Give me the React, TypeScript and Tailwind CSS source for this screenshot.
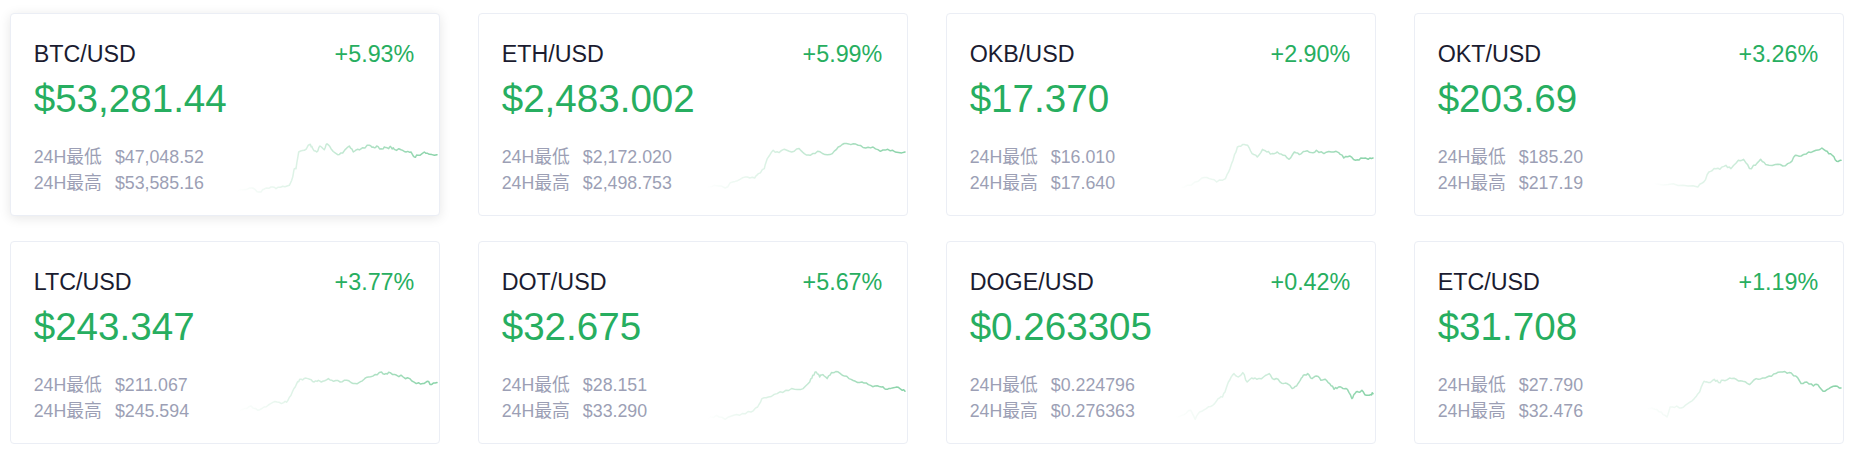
type Pt = [number, number];

interface Ticker {
  pair: string;
  change: string;
  price: string;
  low: string;
  high: string;
  line: Pt[];
}

const tickers: Ticker[] = [
  {
    pair: "BTC/USD",
    change: "+5.93%",
    price: "$53,281.44",
    low: "$47,048.52",
    high: "$53,585.16",
    line: [
      [0, 48.3], [6.7, 46.7], [16.7, 45], [23.3, 49], [28.3, 46], [35, 44], [40, 45.7], [46.7, 43.3],
      [53.3, 42.3], [56.7, 34], [58.3, 25.7], [60, 25.7], [62.7, 9], [68.3, 7.3], [74.3, 1.3], [76.7, 5.7],
      [80.7, 9], [84, 3], [88.3, 6.7], [91, 0.7], [95, 5.7], [101.7, 11.7], [106.7, 10], [113.3, 3],
      [117.3, 9], [121.7, 6.3], [126.7, 4.7], [133.3, 2.3], [137.3, 4], [140.7, 3], [145, 5.7], [148.3, 4],
      [152.7, 5.7], [155, 4], [158.3, 6.3], [165, 6.7], [170, 9], [175, 9], [178.3, 14], [181.7, 12.3],
      [188.3, 9], [193.3, 11.3], [201, 11.7],
    ],
  },
  {
    pair: "ETH/USD",
    change: "+5.99%",
    price: "$2,483.002",
    low: "$2,172.020",
    high: "$2,498.753",
    line: [
      [2.7, 45], [10.1, 42.3], [21.2, 45], [28.6, 39], [36, 36.3], [43.3, 34], [50.7, 35], [54.4, 30.6],
      [60.3, 25.6], [63.3, 15.6], [69.2, 7.3], [75.1, 9.6], [80.3, 6.3], [87.7, 9], [95.1, 5.6], [100.3, 10.6],
      [106.2, 12.3], [113.6, 8.3], [121, 11.6], [128.3, 10.6], [134.2, 4], [140.2, 0.5], [146.8, 1.6],
      [154.2, 2.3], [161.6, 5], [169, 4], [176.4, 8.3], [183.8, 6.3], [191.2, 9], [201, 9],
    ],
  },
  {
    pair: "OKB/USD",
    change: "+2.90%",
    price: "$17.370",
    low: "$16.010",
    high: "$17.640",
    line: [
      [7.7, 44], [18.8, 42.3], [29.9, 35], [37.3, 35.6], [44.7, 39], [53.5, 35.6], [58, 25.6], [61, 17.3],
      [65.4, 4], [70.5, 1.6], [75.7, 2.3], [80.1, 10.6], [85.3, 14], [90.5, 6.3], [94.9, 9], [100.1, 10.6],
      [105.3, 9], [111.2, 12.3], [117.1, 16.3], [122.3, 9], [127.4, 11.6], [133.4, 8.3], [139.3, 9.6],
      [144.4, 7.3], [151.9, 10.6], [159.2, 9], [166.6, 9.6], [171.8, 15], [177.7, 13], [183.6, 17.3],
      [188.8, 15], [196.2, 16.3], [201, 15],
    ],
  },
  {
    pair: "OKT/USD",
    change: "+3.26%",
    price: "$203.69",
    low: "$185.20",
    high: "$217.19",
    line: [
      [13.4, 40.6], [28.2, 41.6], [43, 42.3], [57.8, 44], [63.7, 39], [68.9, 29], [74, 25.6], [79.9, 26.3],
      [85.9, 22.3], [91, 25.6], [98.4, 17.3], [103.6, 16.3], [109.5, 25.6], [115.4, 22.3], [120.6, 16.3],
      [125.8, 21.6], [135.4, 21.6], [142.8, 23], [150.2, 19.6], [155.3, 12.3], [161.2, 13], [168.6, 9],
      [176, 7.3], [181.9, 5], [187.1, 8.3], [192.3, 12.3], [196.7, 18.3], [201, 17.3],
    ],
  },
  {
    pair: "LTC/USD",
    change: "+3.77%",
    price: "$243.347",
    low: "$211.067",
    high: "$245.594",
    line: [
      [2, 41], [8.5, 37.6], [15, 35], [21.6, 39.3], [28.1, 36], [34.6, 32.6], [41.1, 31], [47.6, 31.6],
      [52, 29.3], [56.3, 21], [60.7, 12.6], [63.7, 8.3], [68.1, 7.6], [73.7, 8.3], [78.1, 11], [82.4, 9.3],
      [86.8, 10.3], [92.4, 7.6], [97.6, 10.3], [104.2, 11], [110.7, 9.3], [117.2, 12.6], [122.9, 11.6],
      [128.1, 8.3], [132.4, 6], [139, 3.6], [145.5, 1], [149.8, 2.6], [154.2, 1.6], [160.7, 4.3],
      [167.2, 6], [173.7, 7.6], [180.3, 12.6], [186.8, 12.6], [191.1, 10.3], [195.5, 13.6], [201, 11.6],
    ],
  },
  {
    pair: "DOT/USD",
    change: "+5.67%",
    price: "$32.675",
    low: "$28.151",
    high: "$33.290",
    line: [
      [3.6, 47.6], [12.3, 44.3], [21, 48.3], [29.7, 44.3], [38.3, 42.6], [47, 41], [53.6, 36], [57.9, 27.6],
      [64.4, 26], [73.1, 22.6], [81.8, 19.3], [90.5, 18.3], [99.2, 17.6], [105.7, 11], [108.8, 4.3],
      [112.3, 1], [115.7, 6], [118.8, 3.6], [123.1, 7.6], [127.5, 1.6], [131.8, 0.5], [138.3, 4.3],
      [144.9, 7.6], [151.4, 10.3], [157.9, 11], [164.4, 13.6], [170.9, 15], [177.5, 16], [181.8, 18.3],
      [186.2, 17.6], [192.7, 16], [197, 18.3], [201, 20.3],
    ],
  },
  {
    pair: "DOGE/USD",
    change: "+0.42%",
    price: "$0.263305",
    low: "$0.224796",
    high: "$0.276363",
    line: [
      [3.3, 46], [12.1, 43.6], [18.8, 39.3], [23.2, 48.3], [27.6, 41], [34.2, 37.6], [40.8, 34.3], [46.1, 27.6],
      [50.5, 26], [54.1, 17.6], [57.6, 9.3], [62, 2.6], [66.4, 6], [70.8, 1.6], [75.2, 11], [79.6, 7],
      [84.9, 8.3], [91.5, 6], [97.3, 2.6], [100.4, 7.6], [106.1, 8.3], [111.4, 12.6], [116.7, 13.6],
      [120.2, 17.6], [124.6, 15], [128.2, 9.3], [131.3, 4.3], [135.7, 2.6], [140.1, 7.6], [144.5, 5],
      [148.9, 9.3], [153.3, 8.3], [157.7, 12.6], [162.1, 18.3], [166.5, 16], [171, 17.6], [175.4, 18.3],
      [179.8, 27.6], [182.9, 22.6], [186.4, 21], [189.9, 19.3], [194.3, 24.3], [198.7, 23.6], [201, 22.6],
    ],
  },
  {
    pair: "ETC/USD",
    change: "+1.19%",
    price: "$31.708",
    low: "$27.790",
    high: "$32.476",
    line: [
      [5.8, 37], [14.6, 38.3], [21.2, 41], [27, 46], [30.1, 36], [36.7, 35], [41.1, 37], [47.7, 32.6],
      [54.3, 27.6], [59.6, 21], [64, 10.3], [68.4, 11.6], [74.2, 8.3], [78.6, 11.6], [83, 9.3], [89.6, 7],
      [96.2, 8.3], [102.9, 10.3], [109.5, 13.6], [116.1, 7.6], [122.7, 7], [129.3, 5], [135.9, 2.6],
      [142.6, 1], [149.2, 1.6], [155.8, 5], [161.1, 12.6], [166.8, 11], [173.4, 15], [177.8, 13.6],
      [183.1, 20.3], [188.9, 17.6], [195.5, 15], [201, 17],
    ],
  },
];

// pontos-âncora lidos da tela + um pouco de ruído determinístico entre eles
function roughen(pts: Pt[], seed: number): string {
  let s = seed * 7919 + 13;
  const rnd = () => {
    s = (s * 9301 + 49297) % 233280;
    return s / 233280;
  };
  const out: string[] = [];
  pts.forEach((p, i) => {
    out.push(`${p[0]},${p[1]}`);
    const n = pts[i + 1];
    if (!n) return;
    for (let k = 1; k < 3; k++) {
      const t = k / 3;
      const x = p[0] + (n[0] - p[0]) * t;
      const y = p[1] + (n[1] - p[1]) * t + (rnd() - 0.5) * 2.4;
      out.push(`${x.toFixed(1)},${Math.max(0.5, Math.min(49.5, y)).toFixed(1)}`);
    }
  });
  return out.join(" ");
}

function Sparkline({ points, idx }: { points: Pt[]; idx: number }) {
  const gid = `spark-${idx}`;
  return (
    <svg width={202} height={50} viewBox="0 0 202 50" className="block shrink-0 overflow-visible" aria-hidden="true">
      <defs>
        <linearGradient id={gid} x1="0" y1="0" x2="1" y2="0">
          <stop offset="0%" stopColor="#27ae60" stopOpacity={0} />
          <stop offset="100%" stopColor="#27ae60" stopOpacity={0.55} />
        </linearGradient>
      </defs>
      <polyline
        points={roughen(points, idx + 1)}
        fill="none"
        stroke={`url(#${gid})`}
        strokeWidth={1.5}
        strokeLinejoin="round"
        strokeLinecap="round"
      />
    </svg>
  );
}

function TickerCard({ t, idx, hovered }: { t: Ticker; idx: number; hovered?: boolean }) {
  return (
    <div
      className={`h-[202.7px] rounded-[4px] border border-[#ebeef5] bg-white ${
        hovered ? "shadow-[0_2px_12px_0_rgba(0,0,0,0.1)]" : ""
      }`}
    >
      <div className="flex items-center justify-between pl-[23px] pr-[25px] pt-[25.3px] text-[23.3px] leading-[28px]">
        <span className="text-[#1b1c30]">{t.pair}</span>
        <span className="text-[#27ae60]">{t.change}</span>
      </div>
      <div className="mt-[8.7px] pl-[23px] text-[38.6px] leading-[46px] text-[#27ae60]">{t.price}</div>
      <div className="mt-[20.4px] flex items-start justify-between pl-[23px] pr-[1px]">
        <div className="mt-[1.1px] text-[17.8px] leading-[26.7px] text-[#9c9fb5]">
          <div className="flex">
            <span className="mr-[13px]">24H最低</span>
            <span>{t.low}</span>
          </div>
          <div className="flex">
            <span className="mr-[13px]">24H最高</span>
            <span>{t.high}</span>
          </div>
        </div>
        <Sparkline points={t.line} idx={idx} />
      </div>
    </div>
  );
}

export default function App() {
  return (
    <div className="min-h-[453px] w-[1853px] bg-white font-['Liberation_Sans','Noto_Sans_CJK_SC',sans-serif]">
      <div className="grid grid-cols-[repeat(4,430.6px)] gap-x-[37.4px] gap-y-[25.3px] pl-[9.7px] pt-[13.3px]">
        {tickers.map((t, i) => (
          <TickerCard key={t.pair} t={t} idx={i} hovered={i === 0} />
        ))}
      </div>
    </div>
  );
}
